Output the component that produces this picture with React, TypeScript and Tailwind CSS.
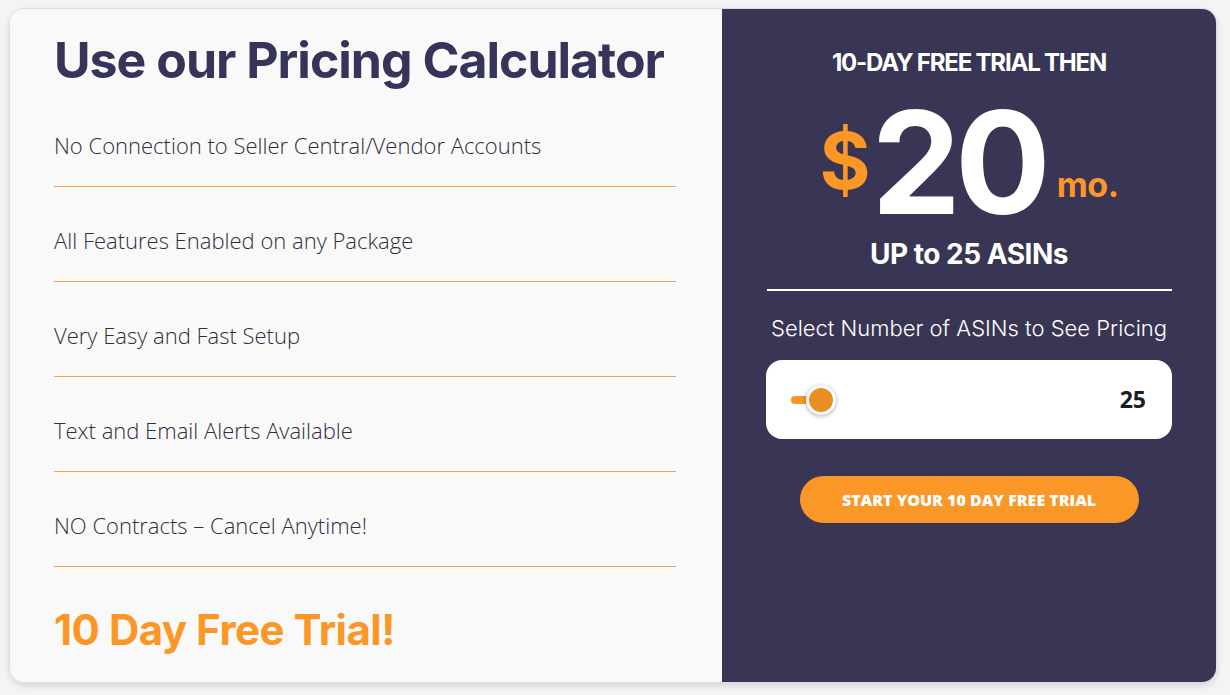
const features = [
  'No Connection to Seller Central/Vendor Accounts',
  'All Features Enabled on any Package',
  'Very Easy and Fast Setup',
  'Text and Email Alerts Available',
  'NO Contracts – Cancel Anytime!',
];

const heading = { fontFamily: 'Inter, "DejaVu Sans", sans-serif' };
const body = { fontFamily: '"Open Sans", "Liberation Sans", sans-serif' };

function FeatureList() {
  return (
    <ul className="mt-[2px] w-[622px]">
      {features.map((f) => (
        <li key={f} className="h-[95px] border-b border-[#f5a04a] pt-[40px]">
          <span className="block text-[22px] leading-[26px] font-light text-[#2f2f3a]" style={body}>
            {f}
          </span>
        </li>
      ))}
    </ul>
  );
}

function AsinSlider({ value }: { value: number }) {
  return (
    <div className="mt-[18px] flex h-[79px] w-[406px] items-center rounded-[16px] bg-white pl-[25px] pr-[26px]">
      <div className="relative h-[8px] w-[30px] rounded-full bg-[#f7962a]">
        <div className="absolute left-[15px] top-[-11px] h-[30px] w-[30px] rounded-full border-[3px] border-white bg-[#ea8f24] shadow-[0_1px_4px_rgba(0,0,0,0.35)]" />
      </div>
      <span className="ml-auto text-[23px] font-bold text-[#1c1c24]" style={body}>
        {value}
      </span>
    </div>
  );
}

export default function App() {
  return (
    <div className="min-h-screen bg-[#f4f4f6] pl-[9px] pt-[8px]">
      <div className="flex h-[675px] w-[1208px] overflow-hidden rounded-[15px] border border-[#dcdce4] shadow-[0_3px_6px_rgba(0,0,0,0.12)]">
        <section className="w-[712px] bg-[#f9f9f9] pl-[44px] pt-[21px]">
          <h1
            className="text-[50px] leading-[60px] font-bold tracking-[-1px] text-[#37345a]"
            style={heading}
          >
            Use our Pricing Calculator
          </h1>
          <FeatureList />
          <p
            className="mt-[38px] text-[42px] leading-[50px] font-bold tracking-[-0.5px] text-[#fb9726]"
            style={heading}
          >
            10 Day Free Trial!
          </p>
        </section>

        <section className="flex flex-1 flex-col items-center bg-[#383654] pt-[38px] text-white" style={heading}>
          <p className="text-[24px] leading-[32px] font-bold tracking-[-1.2px]">10-DAY FREE TRIAL THEN</p>
          <div className="mt-[31px] flex h-[104px] items-end leading-none">
            <span className="mb-[14px] mr-[1px] text-[78px] font-bold text-[#fb9726]">$</span>
            <span className="text-[142px] leading-[104px] font-bold tracking-[-6px]">20</span>
            <span className="mb-[12px] ml-[12px] text-[34px] font-bold tracking-[-0.5px] text-[#fb9726]">mo.</span>
          </div>
          <p className="mt-[22px] text-[28px] leading-[36px] font-bold tracking-[-0.5px]">UP to 25 ASINs</p>
          <div className="mt-[17px] h-[2px] w-[405px] bg-white" />
          <p className="mt-[23px] text-[22px] leading-[28px] font-light">Select Number of ASINs to See Pricing</p>
          <AsinSlider value={25} />
          <button
            className="mt-[37px] h-[47px] w-[339px] rounded-full bg-[#fb9726] text-[16px] font-extrabold text-white"
            style={body}
          >
            START YOUR 10 DAY FREE TRIAL
          </button>
        </section>
      </div>
    </div>
  );
}
